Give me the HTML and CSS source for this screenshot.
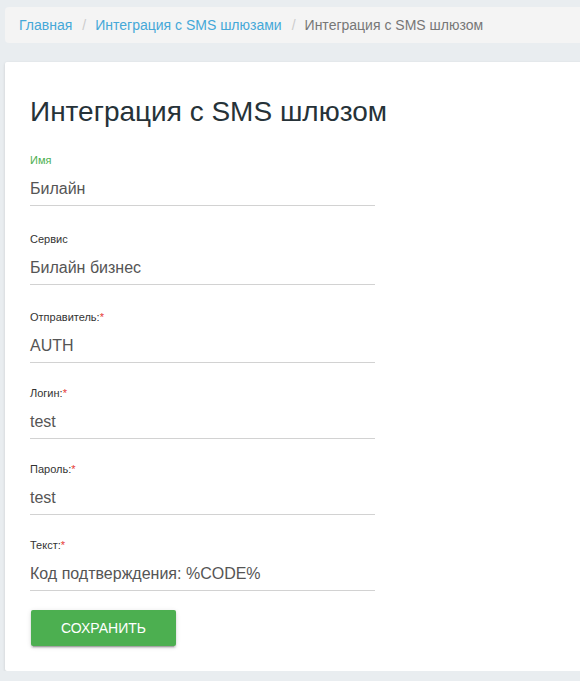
FILE: index.html
```html
<!DOCTYPE html>
<html lang="ru">
<head>
<meta charset="utf-8">
<title>Интеграция с SMS шлюзом</title>
<link rel="stylesheet" href="styles.css">
</head>
<body>
<div class="page">
  <ol class="breadcrumb">
    <li><a href="#">Главная</a></li>
    <li class="sep">/</li>
    <li><a href="#">Интеграция с SMS шлюзами</a></li>
    <li class="sep">/</li>
    <li class="active">Интеграция с SMS шлюзом</li>
  </ol>
  <div class="card">
    <h1 class="title">Интеграция с SMS шлюзом</h1>
    <form class="form">
      <div class="field field-first">
        <label class="label label-focus">Имя</label>
        <div class="value">Билайн</div>
      </div>
      <div class="field field-second">
        <label class="label">Сервис</label>
        <div class="value">Билайн бизнес</div>
      </div>
      <div class="field">
        <label class="label">Отправитель:<span class="req">*</span></label>
        <div class="value">AUTH</div>
      </div>
      <div class="field">
        <label class="label">Логин:<span class="req">*</span></label>
        <div class="value">test</div>
      </div>
      <div class="field">
        <label class="label">Пароль:<span class="req">*</span></label>
        <div class="value">test</div>
      </div>
      <div class="field">
        <label class="label">Текст:<span class="req">*</span></label>
        <div class="value">Код подтверждения: %CODE%</div>
      </div>
      <div class="actions">
        <button type="button" class="btn">Сохранить</button>
      </div>
    </form>
  </div>
</div>
</body>
</html>
```

FILE: styles.css
```css
html, body {
  margin: 0;
  padding: 0;
}
body {
  background: #e9edf0;
  font-family: "Liberation Sans", Arial, sans-serif;
  overflow-x: hidden;
}
.page {
  padding: 7px 0 0 5px;
}
.breadcrumb {
  list-style: none;
  margin: 0 -20px 19px 0;
  padding: 0 14px;
  height: 36px;
  display: flex;
  align-items: center;
  background: #f4f4f4;
  border-radius: 4px;
  font-size: 14px;
}
.breadcrumb li {
  white-space: nowrap;
}
.breadcrumb a {
  color: #45a8d8;
  text-decoration: none;
}
.breadcrumb .sep {
  color: #cccccc;
  padding: 0 9px 0 10px;
}
.breadcrumb .active {
  color: #777777;
}
.card {
  background: #ffffff;
  margin-right: -20px;
  padding: 34px 25px 25px;
  border-radius: 2px;
  box-shadow: 0 1px 3px rgba(0, 0, 0, 0.14);
}
.title {
  margin: 0 0 26px;
  font-size: 28px;
  line-height: 31px;
  font-weight: 400;
  color: #263238;
}
.form {
  display: flex;
  flex-direction: column;
  gap: 23px;
  width: 345px;
}
.field {
  display: flex;
  flex-direction: column;
  border-bottom: 1px solid #d2d2d2;
}
.field-first {
  margin-bottom: 3px;
}
.field-second {
  margin-bottom: 2px;
}
.label {
  font-size: 11px;
  line-height: 14px;
  color: #333333;
  margin-bottom: 2px;
}
.label-focus {
  color: #4caf50;
}
.req {
  color: #e53935;
}
.value {
  font-size: 16px;
  line-height: 32px;
  padding-top: 4px;
  color: #555555;
}
.actions {
  margin-top: -4px;
}
.btn {
  font-family: "Liberation Sans", Arial, sans-serif;
  font-size: 14px;
  text-transform: uppercase;
  color: #ffffff;
  background: #4caf50;
  border: none;
  border-radius: 2px;
  height: 36px;
  width: 145px;
  padding: 0;
  margin-left: 1px;
  box-shadow: 0 2px 2px rgba(0, 0, 0, 0.14), 0 3px 1px -2px rgba(0, 0, 0, 0.2), 0 1px 5px rgba(0, 0, 0, 0.12);
}
```
